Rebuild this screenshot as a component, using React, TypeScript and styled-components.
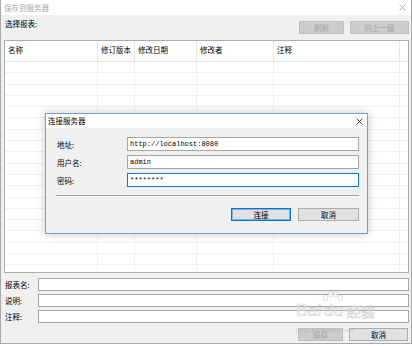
import React from 'react';
import styled, { createGlobalStyle } from 'styled-components';

const cjk = `"Noto Sans CJK SC", "Noto Sans", sans-serif`;

const Global = createGlobalStyle`
  html, body { margin: 0; padding: 0; background: #ffffff; }
  body { font-family: ${cjk}; }
`;

const Window = styled.div`
  position: relative;
  width: 412px;
  height: 344px;
  box-sizing: border-box;
  border: 1px solid #a9a9a9;
  border-top: none;
  background: #f0f0f0;
  display: flex;
  flex-direction: column;
  overflow: hidden;
  font-family: ${cjk};
  font-size: 7.5px;
  color: #000;
`;

const TitleBar = styled.div<{ $active?: boolean }>`
  height: ${p => (p.$active ? 14 : 15)}px;
  flex: none;
  background: #ffffff;
  display: flex;
  align-items: center;
  justify-content: space-between;
  padding: ${p => (p.$active ? '0 4px 0 2px' : '0 5px 0 3px')};
  color: ${p => (p.$active ? '#000' : '#a8a8a8')};
  font-size: 7.5px;
  line-height: 1;
`;

const Body = styled.div`
  flex: 1;
  display: flex;
  flex-direction: column;
  padding: 0 2px 2px 3px;
`;

const TopRow = styled.div`
  display: flex;
  align-items: flex-start;
  padding-top: 2px;
`;

const Label = styled.div<{ $w?: number }>`
  ${p => (p.$w ? `width: ${p.$w}px; flex: none;` : 'flex: 1;')}
  padding-left: 1px;
  line-height: 13px;
  white-space: nowrap;
`;

const TopButtons = styled.div`
  display: flex;
  gap: 6px;
  margin-top: 4px;
`;

const Button = styled.div<{ $w: number; $variant?: 'disabled' | 'default' | 'focus' }>`
  width: ${p => p.$w}px;
  height: 13px;
  box-sizing: border-box;
  border: 1px solid
    ${p => (p.$variant === 'disabled' ? '#bfbfbf' : p.$variant === 'focus' ? '#0078d7' : '#adadad')};
  background: ${p => (p.$variant === 'disabled' ? '#cccccc' : '#e1e1e1')};
  color: ${p => (p.$variant === 'disabled' ? '#a3a3a3' : '#000')};
  box-shadow: ${p => (p.$variant === 'focus' ? 'inset 0 0 0 1px rgba(0,120,215,0.45)' : 'none')};
  font-size: 7.5px;
  line-height: 11px;
  text-align: center;
`;

const Table = styled.div`
  margin-top: 6px;
  height: 233px;
  box-sizing: border-box;
  border: 1px solid #adadad;
  background: #ffffff;
  display: flex;
  flex-direction: column;
  overflow: hidden;
`;

const HeaderRow = styled.div`
  display: flex;
  height: 21px;
  flex: none;
  box-sizing: border-box;
  border-bottom: 1px solid #e5e5e5;
`;

const Row = styled.div`
  display: flex;
  height: 11.3px;
  flex: none;
  box-sizing: border-box;
  border-bottom: 1px solid #f0f0f0;
`;

const Cell = styled.div<{ $w?: number; $head?: boolean }>`
  ${p => (p.$w ? `width: ${p.$w}px; flex: none; border-right: 1px solid ${p.$head ? '#e5e5e5' : '#f0f0f0'};` : 'flex: 1;')}
  box-sizing: border-box;
  padding-left: 3px;
  line-height: 18px;
  white-space: nowrap;
`;

const Fields = styled.div`
  margin-top: 5px;
  display: flex;
  flex-direction: column;
  gap: 3px;
`;

const FieldRow = styled.div`
  display: flex;
  align-items: center;
`;

const FieldBox = styled.div`
  flex: 1;
  height: 13px;
  box-sizing: border-box;
  border: 1px solid #a6a6a6;
  background: #ffffff;
`;

const BottomRow = styled.div`
  margin-top: 5px;
  display: flex;
  justify-content: flex-end;
  gap: 6px;
  padding-right: 1px;
`;

const Dialog = styled.div`
  position: absolute;
  left: 44px;
  top: 113px;
  width: 323px;
  height: 121px;
  box-sizing: border-box;
  border: 1px solid #6e9fd6;
  background: #f0f0f0;
  box-shadow: 0 0 9px rgba(0, 0, 0, 0.22);
  display: flex;
  flex-direction: column;
`;

const DialogBody = styled.div`
  padding: 9px 8px 0 10px;
  display: flex;
  flex-direction: column;
`;

const FormRows = styled.div`
  display: flex;
  flex-direction: column;
  gap: 4px;
`;

const FormRow = styled.div`
  display: flex;
  align-items: center;
`;

const TextBox = styled.div<{ $focus?: boolean }>`
  flex: 1;
  height: 14px;
  box-sizing: border-box;
  border: 1px solid ${p => (p.$focus ? '#0078d7' : '#a5a5a5')};
  background: #ffffff;
  padding-left: 2px;
  font-family: "Liberation Mono", "DejaVu Sans Mono", monospace;
  font-size: 7px;
  line-height: 12px;
  color: #000;
  white-space: nowrap;
`;

const Separator = styled.div`
  margin-top: 8px;
  height: 0;
  border-top: 1px solid #a0a0a0;
  border-bottom: 1px solid #ffffff;
`;

const DialogButtons = styled.div`
  margin-top: 11px;
  display: flex;
  justify-content: flex-end;
  gap: 7px;
`;

const Watermark = styled.div`
  position: absolute;
  left: 295px;
  top: 291px;
  display: flex;
  flex-direction: column;
  pointer-events: none;
  opacity: 0.8;
`;

const WmLine = styled.div`
  display: flex;
  align-items: flex-end;
`;

const WmStack = styled.div`
  display: flex;
  flex-direction: column;
  align-items: center;
  margin-left: 1px;
`;

const WmText = styled.span<{ $size: number }>`
  font-family: "Liberation Sans", Arial, sans-serif;
  font-size: ${p => p.$size}px;
  line-height: 1;
  color: rgba(255, 255, 255, 0.85);
  -webkit-text-stroke: 0.6px #c4c4c4;
  letter-spacing: 0.3px;
`;

const WmCjk = styled(WmText)`
  font-family: ${cjk};
  margin-left: 2px;
  margin-bottom: 1px;
`;

const WmUrl = styled.span`
  margin-top: 8px;
  font-family: "Liberation Sans", Arial, sans-serif;
  font-size: 6px;
  line-height: 1;
  letter-spacing: 0.6px;
  color: rgba(150, 150, 150, 0.55);
`;

const CloseIcon: React.FC<{ color: string }> = ({ color }) => (
  <svg width="7" height="7" viewBox="0 0 7 7">
    <path d="M0.5 0.5 L6.5 6.5 M6.5 0.5 L0.5 6.5" stroke={color} strokeWidth="0.8" fill="none" />
  </svg>
);

const Paw: React.FC = () => (
  <svg width="22" height="14" viewBox="0 0 22 14" style={{ marginBottom: '-3px' }}>
    <g fill="rgba(255,255,255,0.85)" stroke="#c4c4c4" strokeWidth="0.7">
      <ellipse cx="3.5" cy="7" rx="2.2" ry="2.8" />
      <ellipse cx="8.5" cy="3.2" rx="2.2" ry="2.8" />
      <ellipse cx="13.5" cy="3.2" rx="2.2" ry="2.8" />
      <ellipse cx="18.5" cy="7" rx="2.2" ry="2.8" />
    </g>
  </svg>
);

const columns = [
  { w: 93, label: '名称' },
  { w: 37, label: '修订版本' },
  { w: 62, label: '修改日期' },
  { w: 77, label: '修改者' },
  { w: 126, label: '注释' },
];

const rowCount = 19;

export default function App() {
  return (
    <>
      <Global />
      <Window>
        <TitleBar>
          <span>保存到服务器</span>
          <CloseIcon color="#9a9a9a" />
        </TitleBar>
        <Body>
          <TopRow>
            <Label>选择报表:</Label>
            <TopButtons>
              <Button $w={45} $variant="disabled">刷新</Button>
              <Button $w={59} $variant="disabled">向上一级</Button>
            </TopButtons>
          </TopRow>
          <Table>
            <HeaderRow>
              {columns.map(c => (
                <Cell key={c.label} $w={c.w} $head>
                  {c.label}
                </Cell>
              ))}
              <Cell />
            </HeaderRow>
            {Array.from({ length: rowCount }).map((_, i) => (
              <Row key={i}>
                {columns.map(c => (
                  <Cell key={c.label} $w={c.w} />
                ))}
                <Cell />
              </Row>
            ))}
          </Table>
          <Fields>
            <FieldRow>
              <Label $w={33}>报表名:</Label>
              <FieldBox />
            </FieldRow>
            <FieldRow>
              <Label $w={33}>说明:</Label>
              <FieldBox />
            </FieldRow>
            <FieldRow>
              <Label $w={33}>注释:</Label>
              <FieldBox />
            </FieldRow>
          </Fields>
          <BottomRow>
            <Button $w={45} $variant="disabled">保存</Button>
            <Button $w={59} $variant="default">取消</Button>
          </BottomRow>
        </Body>

        <Watermark>
          <WmLine>
            <WmText $size={17}>Bai</WmText>
            <WmStack>
              <Paw />
              <WmText $size={17}>du</WmText>
            </WmStack>
            <WmCjk $size={14}>经验</WmCjk>
          </WmLine>
          <WmUrl>jingyan.baidu.com</WmUrl>
        </Watermark>

        <Dialog>
          <TitleBar $active>
            <span>连接服务器</span>
            <CloseIcon color="#111" />
          </TitleBar>
          <DialogBody>
            <FormRows>
              <FormRow>
                <Label $w={70}>地址:</Label>
                <TextBox>http://localhost:8080</TextBox>
              </FormRow>
              <FormRow>
                <Label $w={70}>用户名:</Label>
                <TextBox>admin</TextBox>
              </FormRow>
              <FormRow>
                <Label $w={70}>密码:</Label>
                <TextBox $focus>********</TextBox>
              </FormRow>
            </FormRows>
            <Separator />
            <DialogButtons>
              <Button $w={60} $variant="focus">连接</Button>
              <Button $w={61} $variant="default">取消</Button>
            </DialogButtons>
          </DialogBody>
        </Dialog>
      </Window>
    </>
  );
}
